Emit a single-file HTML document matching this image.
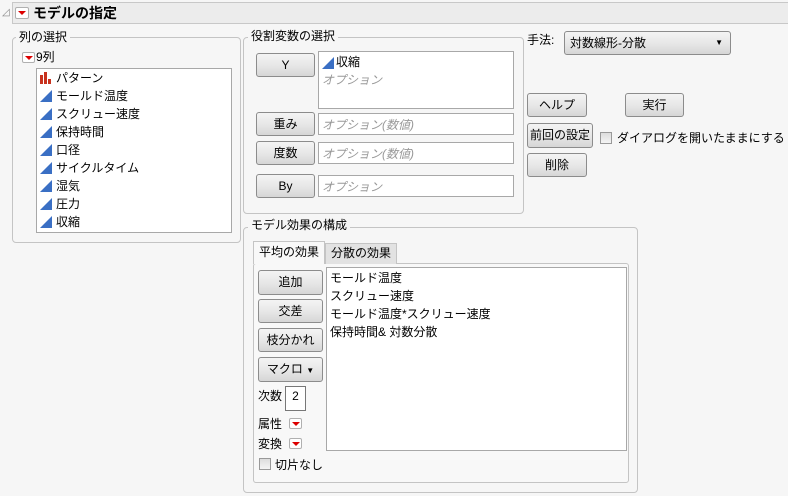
<!DOCTYPE html>
<html><head><meta charset="utf-8"><style>
*{box-sizing:border-box;margin:0;padding:0}
body{width:788px;height:496px;background:#f6f6f6;font-family:"Liberation Sans","Noto Sans CJK JP",sans-serif;font-size:12px;color:#000;position:relative;overflow:hidden}
.a{position:absolute;white-space:nowrap}
.grp{position:absolute;border:1px solid #c4c4c4;border-radius:4px}
.leg{position:absolute;background:#f6f6f6;padding:0 3px;line-height:14px}
.box{position:absolute;background:#fff;border:1px solid #a8a8a8}
.btn{position:absolute;border:1px solid #8c8c8c;border-radius:3px;background:linear-gradient(#f4f4f4,#e6e6e6 55%,#d6d6d6);text-align:center;font-size:12px}
.red{position:absolute;width:13px;height:11px;border:1px solid #b0b0b0;border-radius:2px;background:#fff}
.red:after{content:"";position:absolute;left:2px;top:3px;border-left:4px solid transparent;border-right:4px solid transparent;border-top:4px solid #d00}
.tri{position:absolute;width:12px;height:12px}
.it{position:absolute;left:19px;line-height:18px}
.opt{color:#999;font-style:italic}
.cb{position:absolute;width:12px;height:12px;border:1px solid #999;background:linear-gradient(#ddd,#f4f4f4)}
</style></head><body>
<div class="a" style="left:2px;top:7px;color:#888;font-size:10px">◿</div>
<div class="a" style="left:12px;top:2px;width:776px;height:22px;background:#ececec;border:1px solid #c8c8c8;border-right:none"></div>
<div class="red" style="left:15px;top:7px;width:14px;height:12px"></div>
<div class="a" style="left:33px;top:4px;font-size:14px;font-weight:bold;line-height:18px">モデルの指定</div>

<div class="grp" style="left:12px;top:37px;width:229px;height:206px"></div>
<div class="leg" style="left:16px;top:30px">列の選択</div>
<div class="red" style="left:22px;top:52px"></div>
<div class="a" style="left:36px;top:50px;line-height:14px">9列</div>
<div class="box" style="left:36px;top:68px;width:196px;height:165px">
<svg class="tri" style="left:3px;top:3px" viewBox="0 0 12 12"><rect x="0" y="3" width="3" height="9" fill="#c8321e"/><rect x="4" y="0" width="3" height="12" fill="#c8321e"/><rect x="8" y="7" width="3" height="5" fill="#c8321e"/></svg>
<div class="it" style="top:0">パターン</div>
<svg class="tri" style="left:3px;top:21px" viewBox="0 0 12 12"><path d="M12 0V12H0Z" fill="#3a6fc4"/></svg><div class="it" style="top:18px">モールド温度</div>
<svg class="tri" style="left:3px;top:39px" viewBox="0 0 12 12"><path d="M12 0V12H0Z" fill="#3a6fc4"/></svg><div class="it" style="top:36px">スクリュー速度</div>
<svg class="tri" style="left:3px;top:57px" viewBox="0 0 12 12"><path d="M12 0V12H0Z" fill="#3a6fc4"/></svg><div class="it" style="top:54px">保持時間</div>
<svg class="tri" style="left:3px;top:75px" viewBox="0 0 12 12"><path d="M12 0V12H0Z" fill="#3a6fc4"/></svg><div class="it" style="top:72px">口径</div>
<svg class="tri" style="left:3px;top:93px" viewBox="0 0 12 12"><path d="M12 0V12H0Z" fill="#3a6fc4"/></svg><div class="it" style="top:90px">サイクルタイム</div>
<svg class="tri" style="left:3px;top:111px" viewBox="0 0 12 12"><path d="M12 0V12H0Z" fill="#3a6fc4"/></svg><div class="it" style="top:108px">湿気</div>
<svg class="tri" style="left:3px;top:129px" viewBox="0 0 12 12"><path d="M12 0V12H0Z" fill="#3a6fc4"/></svg><div class="it" style="top:126px">圧力</div>
<svg class="tri" style="left:3px;top:147px" viewBox="0 0 12 12"><path d="M12 0V12H0Z" fill="#3a6fc4"/></svg><div class="it" style="top:144px">収縮</div>
</div>

<div class="grp" style="left:243px;top:37px;width:281px;height:177px"></div>
<div class="leg" style="left:248px;top:29px">役割変数の選択</div>
<div class="btn" style="left:256px;top:53px;width:59px;height:24px;line-height:22px">Y</div>
<div class="box" style="left:318px;top:51px;width:196px;height:58px">
<svg class="tri" style="left:3px;top:5px" viewBox="0 0 12 12"><path d="M12 0V12H0Z" fill="#3a6fc4"/></svg>
<div class="a" style="left:17px;top:1px;line-height:18px">収縮</div>
<div class="a opt" style="left:3px;top:19px;line-height:18px">オプション</div></div>
<div class="btn" style="left:256px;top:112px;width:59px;height:24px;line-height:22px">重み</div>
<div class="box" style="left:318px;top:113px;width:196px;height:22px"><div class="a opt" style="left:3px;top:2px">オプション(数値)</div></div>
<div class="btn" style="left:256px;top:141px;width:59px;height:24px;line-height:22px">度数</div>
<div class="box" style="left:318px;top:142px;width:196px;height:22px"><div class="a opt" style="left:3px;top:2px">オプション(数値)</div></div>
<div class="btn" style="left:256px;top:174px;width:59px;height:24px;line-height:22px">By</div>
<div class="box" style="left:318px;top:175px;width:196px;height:22px"><div class="a opt" style="left:3px;top:2px">オプション</div></div>

<div class="a" style="left:527px;top:31px">手法:</div>
<div class="btn" style="left:564px;top:31px;width:167px;height:24px;line-height:22px;text-align:left;padding-left:5px">対数線形-分散<span style="position:absolute;right:7px;font-size:8px">▼</span></div>
<div class="btn" style="left:527px;top:93px;width:60px;height:24px;line-height:22px">ヘルプ</div>
<div class="btn" style="left:625px;top:93px;width:59px;height:24px;line-height:22px">実行</div>
<div class="btn" style="left:527px;top:123px;width:66px;height:25px;line-height:23px">前回の設定</div>
<div class="cb" style="left:600px;top:132px"></div>
<div class="a" style="left:617px;top:129px">ダイアログを開いたままにする</div>
<div class="btn" style="left:527px;top:153px;width:60px;height:24px;line-height:22px">削除</div>

<div class="grp" style="left:243px;top:227px;width:395px;height:266px"></div>
<div class="leg" style="left:248px;top:218px">モデル効果の構成</div>
<div class="a" style="left:253px;top:263px;width:376px;height:220px;border:1px solid #c4c4c4;border-radius:3px;background:#f8f8f8"></div>
<div class="a" style="left:325px;top:243px;width:72px;height:21px;background:#e2e2e2;border:1px solid #c4c4c4;border-bottom:none;text-align:center;line-height:19px">分散の効果</div>
<div class="a" style="left:253px;top:241px;width:72px;height:23px;background:#f8f8f8;border:1px solid #c4c4c4;border-bottom:none;text-align:center;line-height:21px">平均の効果</div>
<div class="btn" style="left:258px;top:270px;width:65px;height:25px;line-height:23px">追加</div>
<div class="btn" style="left:258px;top:299px;width:65px;height:24px;line-height:22px">交差</div>
<div class="btn" style="left:258px;top:328px;width:65px;height:24px;line-height:22px">枝分かれ</div>
<div class="btn" style="left:258px;top:357px;width:65px;height:25px;line-height:23px">マクロ <span style="font-size:8px">▼</span></div>
<div class="box" style="left:326px;top:267px;width:301px;height:184px;line-height:18px;padding:1px 3px">モールド温度<br>スクリュー速度<br>モールド温度*スクリュー速度<br>保持時間&amp; 対数分散</div>
<div class="a" style="left:258px;top:387px">次数</div>
<div class="box" style="left:285px;top:386px;width:21px;height:25px;border-color:#777;text-align:center;line-height:18px">2</div>
<div class="a" style="left:258px;top:415px">属性</div>
<div class="red" style="left:289px;top:418px"></div>
<div class="a" style="left:258px;top:435px">変換</div>
<div class="red" style="left:289px;top:438px"></div>
<div class="cb" style="left:259px;top:458px"></div>
<div class="a" style="left:275px;top:456px">切片なし</div>
</body></html>
